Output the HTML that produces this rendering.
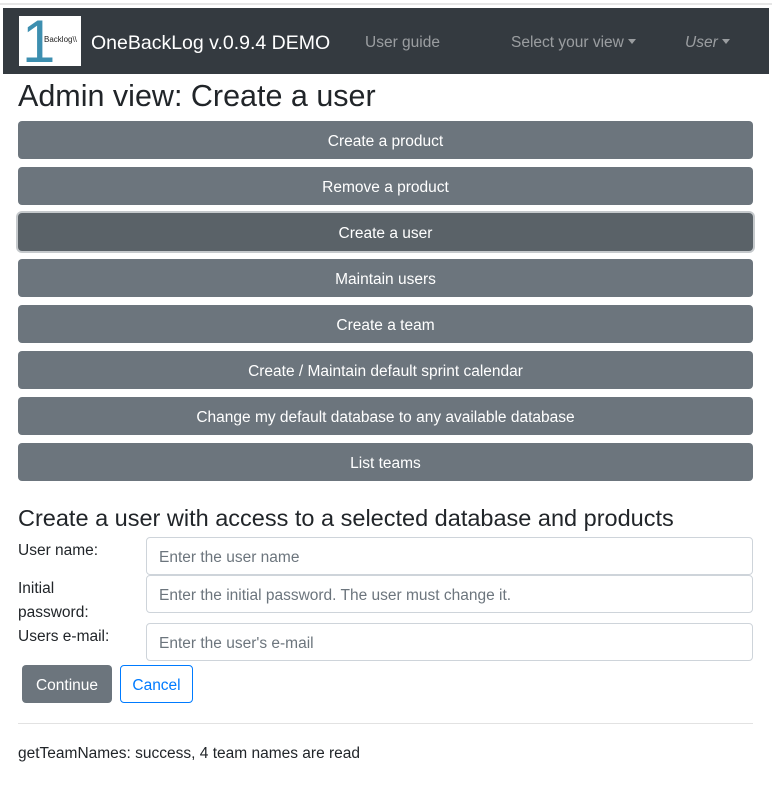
<!DOCTYPE html>
<html><head><style>
*{box-sizing:border-box;margin:0;padding:0}
body{width:772px;height:789px;background:#fff;font-family:"Liberation Sans",sans-serif;color:#212529;position:relative;overflow:hidden}
.a{position:absolute}
.nav{left:3px;top:8px;width:766px;height:66px;background:#343a40}
.topline{left:0;top:3px;width:772px;height:2px;background:#e6e6e6}
.btn{position:absolute;left:18px;width:735px;height:38px;background:#6c757d;color:#fff;border-radius:4px;font-size:15.5px;line-height:41px;text-align:center}
.act{background:#5a6268;box-shadow:0 0 0 2px #c5c9cc}
.inp{position:absolute;left:146px;width:607px;height:38px;border:1px solid #ced4da;border-radius:4px;color:#6c757d;font-size:15.5px;line-height:39px;padding-left:12px}
.lbl{position:absolute;left:18px;font-size:15.5px;line-height:24px}
.nl{position:absolute;top:34px;font-size:15.5px;color:rgba(255,255,255,.5)}
.car{display:inline-block;border-top:5px solid rgba(255,255,255,.5);border-left:4px solid transparent;border-right:4px solid transparent;vertical-align:3px;margin-left:4px}
</style></head><body>
<div class="a topline"></div>
<div class="a nav"></div>
<div class="a" style="left:19px;top:16px;width:62px;height:50px;background:#fff">
<div class="a" style="left:3px;top:-9px;font-size:60px;color:#3d8fb0;font-family:'Liberation Sans',sans-serif">1</div>
<div class="a" style="left:25px;top:19px;font-size:8px;color:#222">Backlog\\</div>
</div>
<div class="a" style="left:91px;top:32px;font-size:19.5px;color:#fff">OneBackLog v.0.9.4 DEMO</div>
<div class="nl" style="left:365px">User guide</div>
<div class="nl" style="left:511px">Select your view<span class="car"></span></div>
<div class="nl" style="left:685px;font-style:italic">User<span class="car"></span></div>
<div class="a" style="left:18px;top:79px;font-size:30.5px;color:#212529">Admin view: Create a user</div>
<div class="btn" style="top:121px">Create a product</div>
<div class="btn" style="top:167px">Remove a product</div>
<div class="btn act" style="top:213px">Create a user</div>
<div class="btn" style="top:259px">Maintain users</div>
<div class="btn" style="top:305px">Create a team</div>
<div class="btn" style="top:351px">Create / Maintain default sprint calendar</div>
<div class="btn" style="top:397px">Change my default database to any available database</div>
<div class="btn" style="top:443px">List teams</div>
<div class="a" style="left:18px;top:505px;font-size:23.5px">Create a user with access to a selected database and products</div>
<div class="lbl" style="top:539px">User name:</div>
<div class="lbl" style="top:577px">Initial<br>password:</div>
<div class="lbl" style="top:625px">Users e-mail:</div>
<div class="inp" style="top:537px">Enter the user name</div>
<div class="inp" style="top:575px">Enter the initial password. The user must change it.</div>
<div class="inp" style="top:623px">Enter the user's e-mail</div>
<div class="a" style="left:22px;top:665px;width:90px;height:38px;background:#6c757d;border-radius:4px;color:#fff;font-size:15.5px;line-height:41px;text-align:center">Continue</div>
<div class="a" style="left:120px;top:665px;width:73px;height:38px;border:1px solid #007bff;border-radius:4px;color:#007bff;font-size:15.5px;line-height:39px;text-align:center">Cancel</div>
<div class="a" style="left:18px;top:723px;width:735px;height:1px;background:#e2e2e2"></div>
<div class="a" style="left:18px;top:745px;font-size:15.5px">getTeamNames: success, 4 team names are read</div>
</body></html>
